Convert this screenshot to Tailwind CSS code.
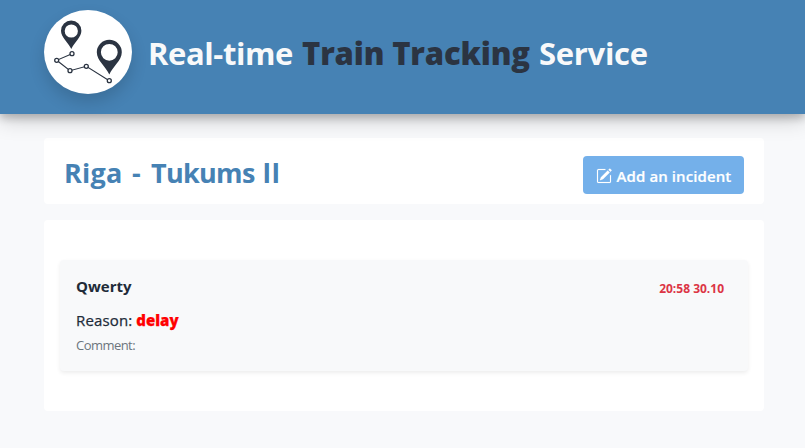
<!DOCTYPE html>
<html lang="en">
<head>
<meta charset="utf-8">
<title>Real-time Train Tracking Service</title>
<script src="https://cdn.jsdelivr.net/npm/@tailwindcss/browser@4"></script>
</head>
<body class="h-[448px] overflow-hidden bg-[#f8f9fb] font-['Open_Sans','Noto_Sans',sans-serif] text-[#212b38]">
<header class="relative flex h-[114px] items-start bg-[#4682b4] pl-11 pt-[10px] shadow-[0_4px_8px_rgba(0,0,0,0.2),0_6px_20px_rgba(0,0,0,0.19)]">
  <svg class="h-[84px] w-[88px] shrink-0 rounded-[50%] bg-white shadow-[0_8px_16px_rgba(0,0,0,0.15)]" viewBox="44 10 88 84" fill="none" stroke="#2b3442">
    <path fill="#2b3442" stroke="none" fill-rule="evenodd" d="M71.3 49C68.5 43 61 37.500 61 30.800a10.200 10.200 0 0 1 20.400 0C81.400 37.500 74 43 71.300 49ZM64.700 31a6.600 6.600 0 1 0 13.200 0a6.600 6.600 0 1 0-13.200 0Z"/>
    <path fill="#2b3442" stroke="none" fill-rule="evenodd" d="M109.300 74.500C106 67 96.800 60.500 96.800 52.300a12.500 12.500 0 0 1 25 0C121.800 60.500 112.500 67 109.300 74.500ZM100.900 52.300a8.400 8.400 0 1 0 16.800 0a8.400 8.400 0 1 0-16.800 0Z"/>
    <path stroke-width="1.100" d="M72 53.700 56.700 60.300 70 70.700 86.300 66.300 109.300 80.700"/>
    <g fill="#fff" stroke-width="1.300"><circle cx="72" cy="53.700" r="2"/><circle cx="56.700" cy="60.300" r="2"/><circle cx="70" cy="70.700" r="2"/><circle cx="86.300" cy="66.300" r="2"/><circle cx="109.300" cy="80.700" r="2"/></g>
  </svg>
  <h1 class="ml-4 mt-[21px] flex gap-x-[9px] whitespace-nowrap text-[31px] leading-[44px] font-bold text-[#f8f9fa]"><span class="w-[145px] tracking-[-0.4px]">Real-time</span><span class="w-[228px] font-extrabold tracking-[-0.15px] text-[#2b3442]">Train Tracking</span><span class="tracking-[-0.3px]">Service</span></h1>
</header>
<main class="ml-11 mt-6 w-[720px]">
  <section class="flex h-[66px] items-center justify-between rounded bg-white px-5">
    <h2 class="mt-1 flex whitespace-nowrap text-[27px] leading-9 font-bold text-[#4682b4]"><span class="w-[68px] tracking-[0.2px]">Riga</span><span class="w-[19px]">-</span><span class="w-[112px] tracking-[-0.7px]">Tukums</span><span class="pt-px font-['Inter','Open_Sans',sans-serif] tracking-[1.5px]">II</span></h2>
    <button class="mt-2 flex h-[38px] w-[161px] items-center rounded bg-[#74b0ea] pl-[12.5px] pt-0.5 text-[15px] font-semibold whitespace-nowrap text-white">
      <svg class="mr-[5px] size-4 shrink-0" viewBox="0 0 16 16" fill="currentColor" stroke="currentColor" stroke-width="0.15"><path d="M15.502 1.940a.5.5 0 0 1 0 .706L14.459 3.690l-2-2L13.502.646a.5.5 0 0 1 .707 0l1.293 1.293zm-1.750 2.456-2-2L4.939 9.210a.5.5 0 0 0-.121.196l-.805 2.414a.25.25 0 0 0 .316.316l2.414-.805a.5.5 0 0 0 .196-.12z"/><path fill-rule="evenodd" d="M1 13.500A1.500 1.500 0 0 0 2.500 15h11a1.500 1.500 0 0 0 1.500-1.500v-6a.5.5 0 0 0-1 0v6a.5.5 0 0 1-.5.5h-11a.5.5 0 0 1-.5-.5v-11a.5.5 0 0 1 .5-.5H9a.5.5 0 0 0 0-1H2.500A1.500 1.500 0 0 0 1 2.500z"/></svg>
      <span class="tracking-[0.1px] [-webkit-text-stroke:0.2px_currentColor]">Add an incident</span>
    </button>
  </section>
  <section class="mt-4 h-[191px] rounded bg-white px-4 pt-10">
    <article class="h-[111px] rounded bg-[#f8f9fa] px-4 pt-[15px] shadow-[0_2px_4px_rgba(0,0,0,0.075)]">
      <div class="flex h-6 justify-between pr-2">
        <h3 class="text-[15px] leading-[22px] font-bold">Qwerty</h3>
        <time class="text-xs leading-[28px] font-bold text-[#dc3545]">20:58 30.10</time>
      </div>
      <p class="mt-[9px] text-[15px] leading-6 font-medium [-webkit-text-stroke:0.25px_currentColor]"><span class="tracking-[0.15px]">Reason:</span> <span class="font-extrabold text-[#ff0000]">delay</span></p>
      <p class="mt-[3px] text-[13px] leading-5 tracking-[-0.55px] text-[#6c757d]">Comment:</p>
    </article>
  </section>
</main>
</body>
</html>
